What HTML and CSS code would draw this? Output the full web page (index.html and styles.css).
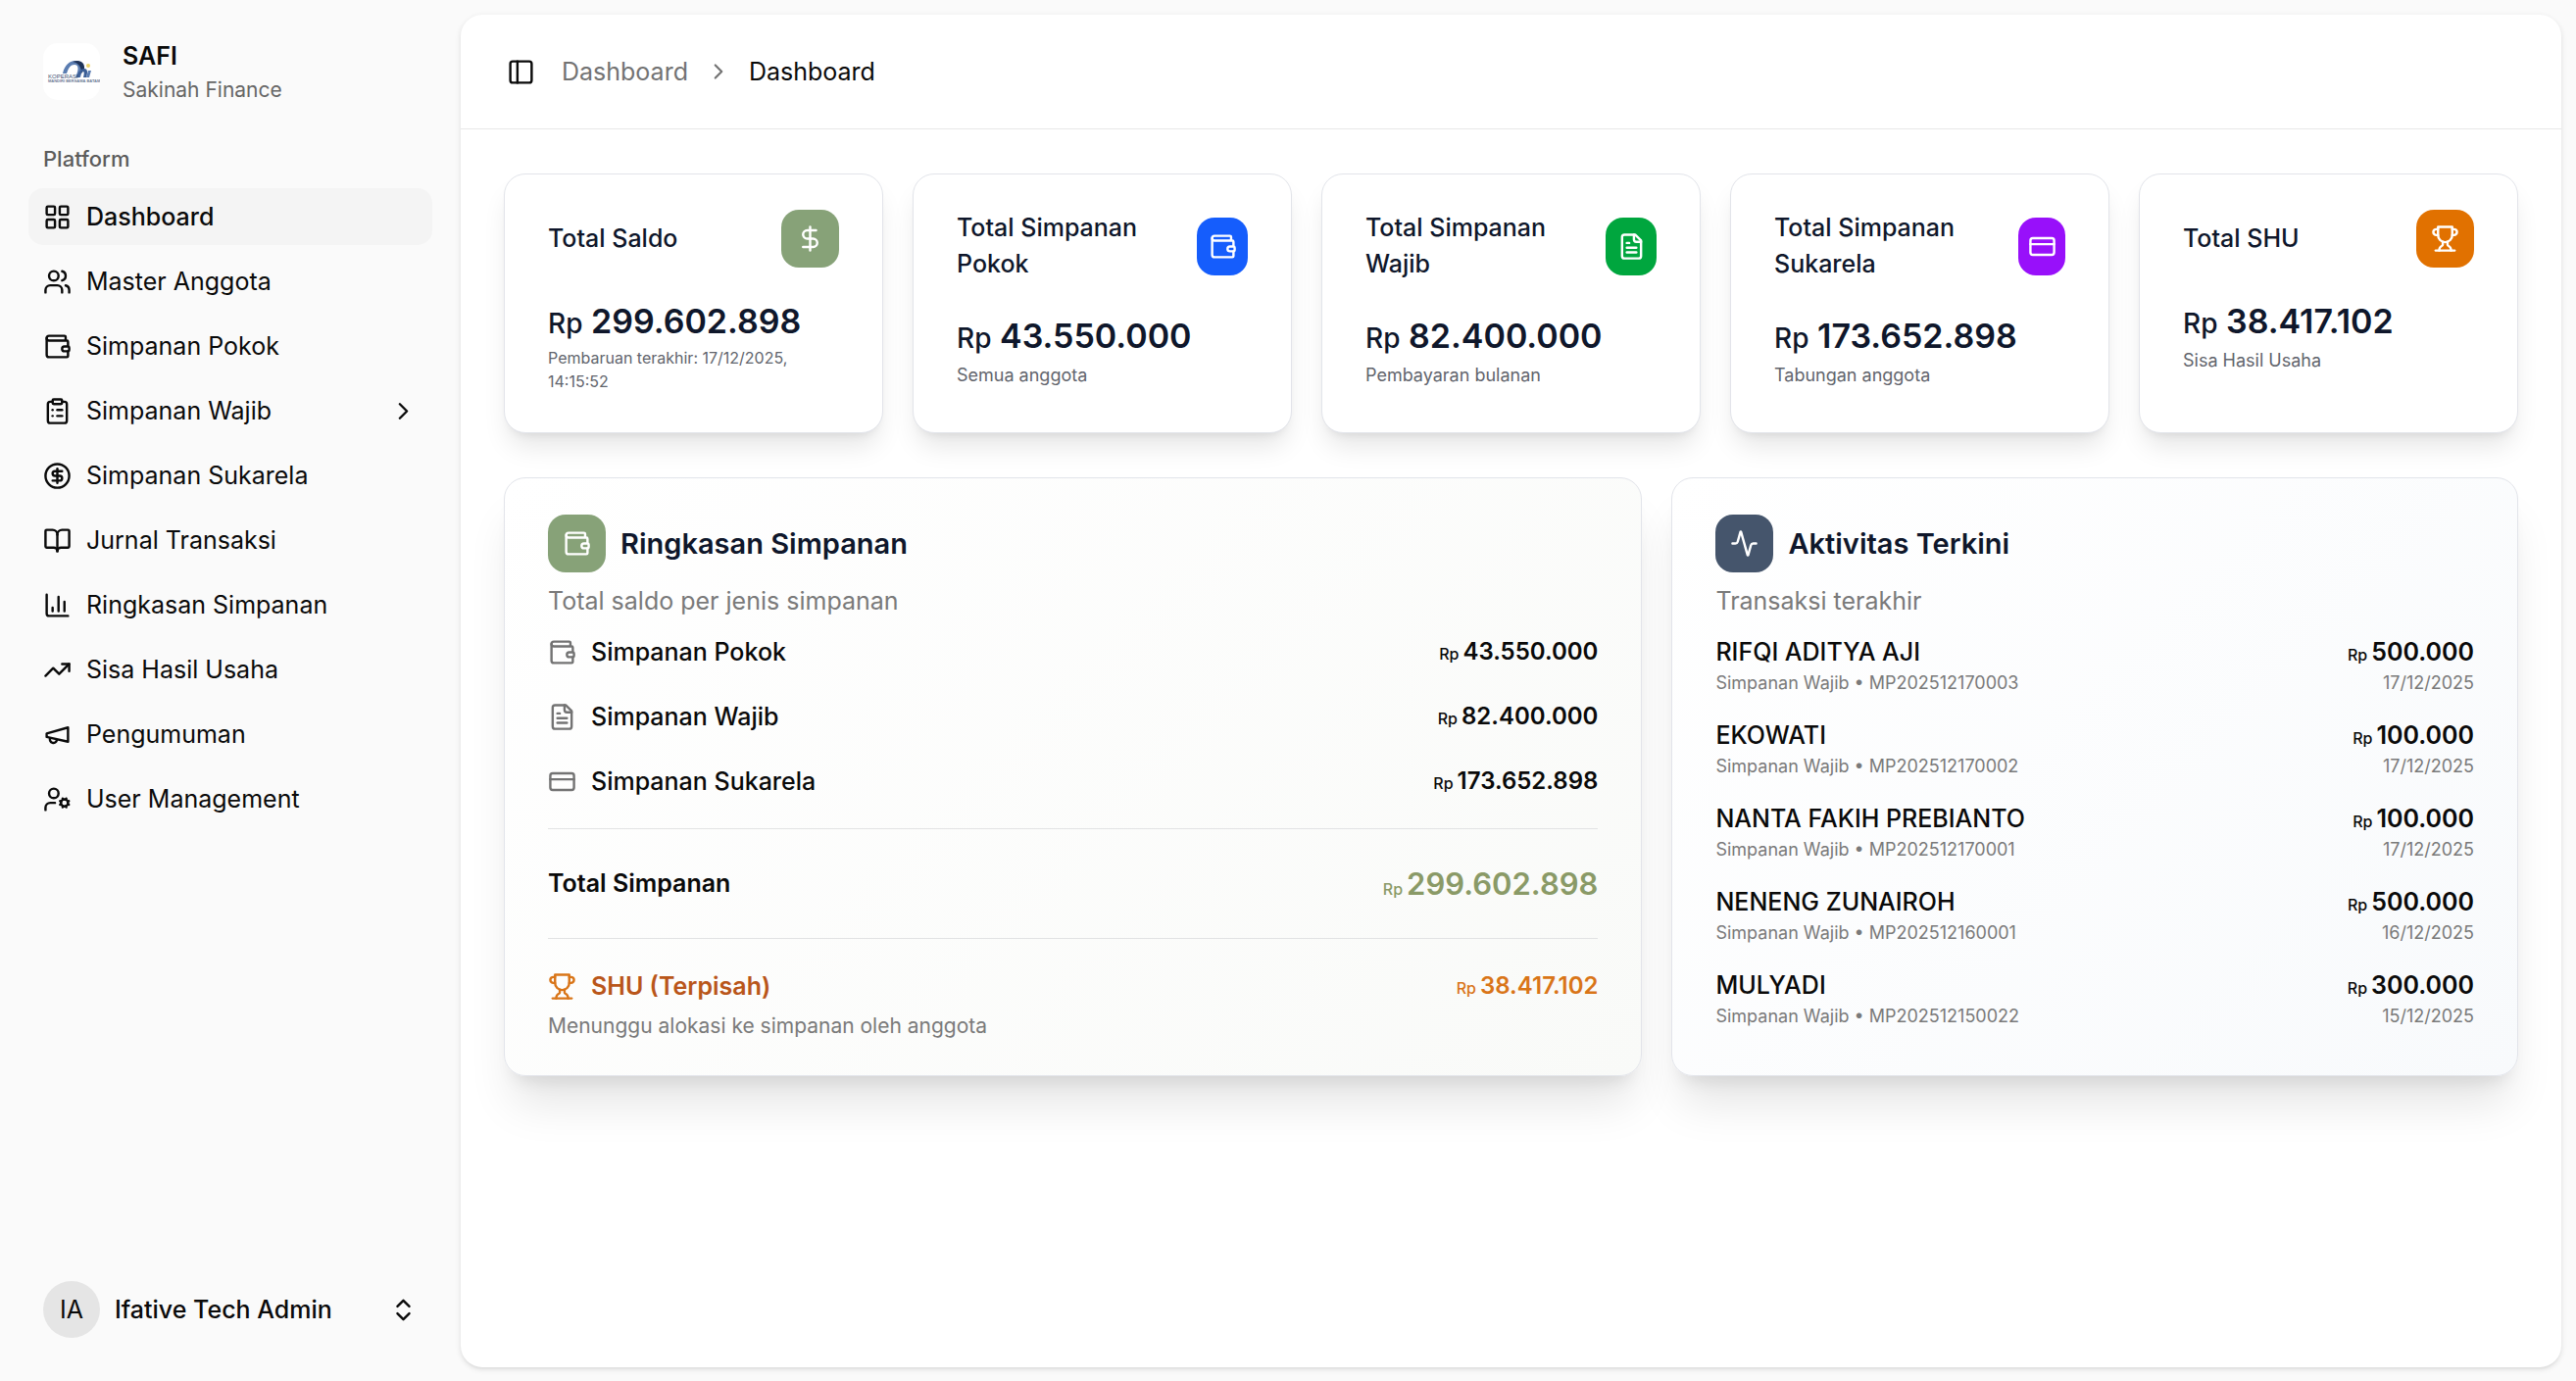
FILE: index.html
```html
<!DOCTYPE html>
<html lang="id">
<head>
<meta charset="utf-8">
<meta name="viewport" content="width=device-width, initial-scale=1">
<title>Dashboard - SAFI</title>
<link rel="stylesheet" href="styles.css">
</head>
<body>
<svg class="sprite" aria-hidden="true">
  <symbol id="grid" viewBox="0 0 24 24"><rect width="7" height="7" x="3" y="3" rx="1"/><rect width="7" height="7" x="14" y="3" rx="1"/><rect width="7" height="7" x="14" y="14" rx="1"/><rect width="7" height="7" x="3" y="14" rx="1"/></symbol>
  <symbol id="users" viewBox="0 0 24 24"><path d="M16 21v-2a4 4 0 0 0-4-4H6a4 4 0 0 0-4 4v2"/><circle cx="9" cy="7" r="4"/><path d="M22 21v-2a4 4 0 0 0-3-3.87"/><path d="M16 3.13a4 4 0 0 1 0 7.75"/></symbol>
  <symbol id="wallet" viewBox="0 0 24 24"><path d="M19 7V4a1 1 0 0 0-1-1H5a2 2 0 0 0 0 4h15a1 1 0 0 1 1 1v4h-3a2 2 0 0 0 0 4h3a1 1 0 0 0 1-1v-2a1 1 0 0 0-1-1"/><path d="M3 5v14a2 2 0 0 0 2 2h15a1 1 0 0 0 1-1v-4"/></symbol>
  <symbol id="clipboard" viewBox="0 0 24 24"><rect width="8" height="4" x="8" y="2" rx="1"/><path d="M16 4h2a2 2 0 0 1 2 2v14a2 2 0 0 1-2 2H6a2 2 0 0 1-2-2V6a2 2 0 0 1 2-2h2"/><path d="M12 11h4"/><path d="M12 16h4"/><path d="M8 11h.01"/><path d="M8 16h.01"/></symbol>
  <symbol id="coin" viewBox="0 0 24 24"><circle cx="12" cy="12" r="10"/><path d="M16 8h-6a2 2 0 1 0 0 4h4a2 2 0 1 1 0 4H8"/><path d="M12 18V6"/></symbol>
  <symbol id="book" viewBox="0 0 24 24"><path d="M12 7v14"/><path d="M3 18a1 1 0 0 1-1-1V4a1 1 0 0 1 1-1h5a4 4 0 0 1 4 4 4 4 0 0 1 4-4h5a1 1 0 0 1 1 1v13a1 1 0 0 1-1 1h-6a3 3 0 0 0-3 3 3 3 0 0 0-3-3z"/></symbol>
  <symbol id="chart" viewBox="0 0 24 24"><path d="M3 3v16a2 2 0 0 0 2 2h16"/><path d="M18 17V9"/><path d="M13 17V5"/><path d="M8 17v-3"/></symbol>
  <symbol id="trend" viewBox="0 0 24 24"><path d="M16 7h6v6"/><path d="m22 7-8.5 8.5-5-5L2 17"/></symbol>
  <symbol id="megaphone" viewBox="0 0 24 24"><path d="m3 11 18-5v12L3 14v-3z"/><path d="M11.6 16.8a3 3 0 1 1-5.8-1.6"/></symbol>
  <symbol id="user-cog" viewBox="0 0 24 24"><path d="M10 15H6a4 4 0 0 0-4 4v2"/><circle cx="9" cy="7" r="4"/><circle cx="18" cy="15" r="3"/><path d="m14.305 16.53.923-.382"/><path d="m15.228 13.852-.923-.383"/><path d="m16.852 12.228-.383-.923"/><path d="m16.852 17.772-.383.924"/><path d="m19.148 12.228.383-.923"/><path d="m19.53 18.696-.382-.924"/><path d="m20.772 13.852.924-.383"/><path d="m20.772 16.148.924.383"/></symbol>
  <symbol id="chevron" viewBox="0 0 24 24"><path d="m9 18 6-6-6-6"/></symbol>
  <symbol id="updown" viewBox="0 0 24 24"><path d="m7 15 5 5 5-5"/><path d="m7 9 5-5 5 5"/></symbol>
  <symbol id="sidebar" viewBox="0 0 24 24"><rect width="18" height="18" x="3" y="3" rx="2"/><path d="M9 3v18"/></symbol>
  <symbol id="dollar" viewBox="0 0 24 24"><path d="M12 2v20"/><path d="M17 5H9.500a3.500 3.500 0 0 0 0 7h5a3.500 3.500 0 0 1 0 7H6"/></symbol>
  <symbol id="file" viewBox="0 0 24 24"><path d="M15 2H6a2 2 0 0 0-2 2v16a2 2 0 0 0 2 2h12a2 2 0 0 0 2-2V7Z"/><path d="M14 2v4a2 2 0 0 0 2 2h4"/><path d="M10 9H8"/><path d="M16 13H8"/><path d="M16 17H8"/></symbol>
  <symbol id="card" viewBox="0 0 24 24"><rect width="20" height="14" x="2" y="5" rx="2"/><path d="M2 10h20"/></symbol>
  <symbol id="trophy" viewBox="0 0 24 24"><path d="M6 9H4.500a2.500 2.500 0 0 1 0-5H6"/><path d="M18 9h1.500a2.500 2.500 0 0 0 0-5H18"/><path d="M4 22h16"/><path d="M10 14.660V17c0 .55-.47.98-.97 1.210C7.850 18.750 7 20.240 7 22"/><path d="M14 14.660V17c0 .55.47.98.97 1.210C16.150 18.750 17 20.240 17 22"/><path d="M18 2H6v7a6 6 0 0 0 12 0V2Z"/></symbol>
  <symbol id="activity" viewBox="0 0 24 24"><path d="M22 12h-2.480a2 2 0 0 0-1.930 1.460l-2.350 8.360a.25.25 0 0 1-.48 0L9.240 2.180a.25.25 0 0 0-.48 0l-2.350 8.360A2 2 0 0 1 4.490 12H2"/></symbol>
</svg>

<div class="app">
  <aside class="sidebar">
    <a class="brand" href="#">
      <svg class="brand-logo" viewBox="0 0 58 58" role="img" aria-label="Koperasi">
        <path d="M20 31C22 22 27 18 33 18C39 18 42 22 38 35H33C37 26 36 22 32 22C28 22 26 25 24 31Z" fill="#5b7db1"/>
        <path d="M30 19C38 16 43 20 42 27L39 31C39 24 36 20 30 19Z" fill="#1f3358"/>
        <path d="M34 35C36 29 39 26 42 26C45 26 46 29 44 35H41C42 31 42 29 41 29C39 29 38 32 37 35Z" fill="#3c5f96"/>
        <path d="M44 35L46 28H49L47 35Z" fill="#5b7db1"/>
        <circle cx="46" cy="23" r="2" fill="#edd36b"/>
        <text x="5" y="36" class="logo-name">KOPERASI</text>
        <text x="5" y="40" class="logo-sub">MANDIRI BERSAMA BATAM</text>
      </svg>
      <span class="brand-text"><strong>SAFI</strong><span>Sakinah Finance</span></span>
    </a>
    <nav class="nav" aria-labelledby="nav-title">
      <h2 id="nav-title">Platform</h2>
      <a class="nav-item active" href="#"><svg class="icon"><use href="#grid"/></svg>Dashboard</a>
      <a class="nav-item" href="#"><svg class="icon"><use href="#users"/></svg>Master Anggota</a>
      <a class="nav-item" href="#"><svg class="icon"><use href="#wallet"/></svg>Simpanan Pokok</a>
      <button class="nav-item" type="button"><svg class="icon"><use href="#clipboard"/></svg>Simpanan Wajib<svg class="icon end"><use href="#chevron"/></svg></button>
      <a class="nav-item" href="#"><svg class="icon"><use href="#coin"/></svg>Simpanan Sukarela</a>
      <a class="nav-item" href="#"><svg class="icon"><use href="#book"/></svg>Jurnal Transaksi</a>
      <a class="nav-item" href="#"><svg class="icon"><use href="#chart"/></svg>Ringkasan Simpanan</a>
      <a class="nav-item" href="#"><svg class="icon"><use href="#trend"/></svg>Sisa Hasil Usaha</a>
      <a class="nav-item" href="#"><svg class="icon"><use href="#megaphone"/></svg>Pengumuman</a>
      <a class="nav-item" href="#"><svg class="icon"><use href="#user-cog"/></svg>User Management</a>
    </nav>
    <button class="account" type="button"><span class="avatar">IA</span>Ifative Tech Admin<svg class="icon end"><use href="#updown"/></svg></button>
  </aside>

  <main class="main">
    <header class="topbar">
      <button class="toggle" type="button" aria-label="Toggle sidebar"><svg class="icon"><use href="#sidebar"/></svg></button>
      <nav class="crumbs" aria-label="Breadcrumb">
        <a href="#">Dashboard</a>
        <svg class="icon crumb-sep"><use href="#chevron"/></svg>
        <span aria-current="page">Dashboard</span>
      </nav>
    </header>

    <div class="content">
      <section class="stats" aria-label="Statistik">
        <article class="stat">
          <div class="stat-head"><h3>Total Saldo</h3><span class="tile sage"><svg class="icon"><use href="#dollar"/></svg></span></div>
          <p class="stat-value"><span>Rp</span> 299.602.898</p>
          <p class="stat-note compact">Pembaruan terakhir: 17/12/2025, 14:15:52</p>
        </article>
        <article class="stat">
          <div class="stat-head"><h3>Total Simpanan Pokok</h3><span class="tile narrow blue"><svg class="icon"><use href="#wallet"/></svg></span></div>
          <p class="stat-value"><span>Rp</span> 43.550.000</p>
          <p class="stat-note">Semua anggota</p>
        </article>
        <article class="stat">
          <div class="stat-head"><h3>Total Simpanan Wajib</h3><span class="tile narrow green"><svg class="icon"><use href="#file"/></svg></span></div>
          <p class="stat-value"><span>Rp</span> 82.400.000</p>
          <p class="stat-note">Pembayaran bulanan</p>
        </article>
        <article class="stat">
          <div class="stat-head"><h3>Total Simpanan Sukarela</h3><span class="tile slim purple"><svg class="icon"><use href="#card"/></svg></span></div>
          <p class="stat-value"><span>Rp</span> 173.652.898</p>
          <p class="stat-note">Tabungan anggota</p>
        </article>
        <article class="stat">
          <div class="stat-head"><h3>Total SHU</h3><span class="tile orange"><svg class="icon"><use href="#trophy"/></svg></span></div>
          <p class="stat-value"><span>Rp</span> 38.417.102</p>
          <p class="stat-note">Sisa Hasil Usaha</p>
        </article>
      </section>

      <div class="panels">
        <section class="panel summary">
          <div class="panel-head"><span class="tile sage"><svg class="icon"><use href="#wallet"/></svg></span><h2>Ringkasan Simpanan</h2></div>
          <p class="panel-desc">Total saldo per jenis simpanan</p>
          <ul class="savings">
            <li><svg class="icon"><use href="#wallet"/></svg><span>Simpanan Pokok</span><b class="amount"><small>Rp</small>43.550.000</b></li>
            <li><svg class="icon"><use href="#file"/></svg><span>Simpanan Wajib</span><b class="amount"><small>Rp</small>82.400.000</b></li>
            <li><svg class="icon"><use href="#card"/></svg><span>Simpanan Sukarela</span><b class="amount"><small>Rp</small>173.652.898</b></li>
          </ul>
          <div class="total"><span>Total Simpanan</span><b class="amount"><small>Rp</small>299.602.898</b></div>
          <div class="shu"><svg class="icon"><use href="#trophy"/></svg><span>SHU (Terpisah)</span><b class="amount"><small>Rp</small>38.417.102</b></div>
          <p class="shu-note">Menunggu alokasi ke simpanan oleh anggota</p>
        </section>

        <section class="panel recent">
          <div class="panel-head"><span class="tile slate"><svg class="icon"><use href="#activity"/></svg></span><h2>Aktivitas Terkini</h2></div>
          <p class="panel-desc">Transaksi terakhir</p>
          <ul class="activity">
            <li><div><p class="name">RIFQI ADITYA AJI</p><p class="meta">Simpanan Wajib • MP202512170003</p></div><div class="right"><p class="amount"><small>Rp</small>500.000</p><p class="meta">17/12/2025</p></div></li>
            <li><div><p class="name">EKOWATI</p><p class="meta">Simpanan Wajib • MP202512170002</p></div><div class="right"><p class="amount"><small>Rp</small>100.000</p><p class="meta">17/12/2025</p></div></li>
            <li><div><p class="name">NANTA FAKIH PREBIANTO</p><p class="meta">Simpanan Wajib • MP202512170001</p></div><div class="right"><p class="amount"><small>Rp</small>100.000</p><p class="meta">17/12/2025</p></div></li>
            <li><div><p class="name">NENENG ZUNAIROH</p><p class="meta">Simpanan Wajib • MP202512160001</p></div><div class="right"><p class="amount"><small>Rp</small>500.000</p><p class="meta">16/12/2025</p></div></li>
            <li><div><p class="name">MULYADI</p><p class="meta">Simpanan Wajib • MP202512150022</p></div><div class="right"><p class="amount"><small>Rp</small>300.000</p><p class="meta">15/12/2025</p></div></li>
          </ul>
        </section>
      </div>
    </div>
  </main>
</div>
</body>
</html>
```
FILE: styles.css
```css
*, *::before, *::after { box-sizing: border-box; }

body {
  margin: 0;
  background: #fafafa;
  color: #0a0a0a;
  font: 400 25px/36px Inter, "Liberation Sans", sans-serif;
}

h2, h3, p, ul { margin: 0; padding: 0; font-weight: inherit; font-size: inherit; }
ul { list-style: none; }
a { color: inherit; text-decoration: none; }
button { border: 0; background: none; padding: 0; color: inherit; font: inherit; text-align: left; cursor: pointer; }

.sprite { display: none; }

.icon {
  width: 29px;
  height: 29px;
  flex: none;
  fill: none;
  stroke: currentColor;
  stroke-width: 2;
  stroke-linecap: round;
  stroke-linejoin: round;
}
.end { margin-left: auto; }

/* Shell */
.app { display: flex; min-height: 100vh; }

.sidebar {
  display: flex;
  flex-direction: column;
  flex: none;
  width: 470px;
  padding: 44px 29px 29px;
}

.brand { display: flex; align-items: center; gap: 23px; height: 58px; padding: 0 15px; }
.brand-logo { width: 58px; height: 58px; flex: none; background: #fff; border-radius: 15px; }
.logo-name { font: 500 6px "Liberation Sans", sans-serif; fill: #3d4f70; }
.logo-sub { font: 700 4px "Liberation Sans", sans-serif; fill: #6d7c96; }
.brand-text { display: flex; flex-direction: column; padding-top: 4px; }
.brand-text strong { font-weight: 600; line-height: 34px; }
.brand-text span { font-size: 21px; color: #666; }

.nav { display: flex; flex-direction: column; gap: 8px; padding-top: 38px; }
.nav h2 { padding: 0 15px; font-size: 22px; font-weight: 500; line-height: 44px; color: #5c5c5c; }
.nav-item { display: flex; align-items: center; gap: 15px; height: 58px; padding: 0 15px; border-radius: 15px; }
.nav-item.active { background: #f4f4f4; font-weight: 500; }

.account { display: flex; align-items: center; gap: 15px; height: 88px; padding: 0 15px; margin-top: auto; font-weight: 500; }
.avatar {
  display: grid;
  place-items: center;
  width: 58px;
  height: 58px;
  border-radius: 50%;
  background: #e5e5e5;
  font-weight: 400;
}

.main {
  flex: 1;
  min-width: 0;
  margin: 15px 15px 14px 0;
  border-radius: 22px;
  background: #fff;
  box-shadow: 0 2px 6px rgba(0, 0, 0, .1), 0 2px 4px -2px rgba(0, 0, 0, .1);
}

.topbar { display: flex; align-items: center; gap: 27px; height: 117px; padding: 0 47px; border-bottom: 1px solid #e8e8e8; }
.toggle { display: flex; }
.crumbs { display: flex; align-items: center; gap: 18px; }
.crumbs a, .crumb-sep { color: #737373; }
.crumb-sep { width: 26px; height: 26px; }

.content { display: flex; flex-direction: column; gap: 45px; padding: 45px 44px; }

/* Icon tiles */
.tile { display: grid; place-items: center; flex: none; width: 59px; height: 59px; border-radius: 18px; color: #fff; }
.tile.narrow { width: 52px; }
.tile.slim { width: 48px; }
.sage { background: #87a278; }
.blue { background: #155dfc; }
.green { background: #00a63e; }
.purple { background: #9810fa; }
.orange { background: #e17100; }
.slate { background: #45556c; }

/* Stat cards */
.stats { display: grid; grid-template-columns: repeat(5, 1fr); gap: 30px; }
.stat {
  padding: 36px 44px 40px;
  border: 1px solid #e2e4ea;
  border-radius: 22px;
  background: #fff;
  box-shadow: 0 18px 27px -5px rgba(0, 0, 0, .1), 0 7px 11px -7px rgba(0, 0, 0, .1);
}
.stat-head { display: flex; align-items: center; justify-content: space-between; margin-bottom: 29px; }
.stat-head h3 { max-width: 240px; font-weight: 500; line-height: 37px; color: #0f172b; }
.stat-value { font-size: 34px; font-weight: 600; line-height: 51px; color: #0f172b; white-space: nowrap; }
.stat-value span { font-size: 28px; font-weight: 500; line-height: 1; }
.stat-note { font-size: 18px; line-height: 29px; color: #62656d; }
.stat-note.compact { font-size: 16px; line-height: 24px; }

/* Panels */
.panels { display: grid; grid-template-columns: repeat(7, 1fr); gap: 30px; }
.panel {
  padding: 37px 44px 36px;
  border: 1px solid #e2e4ea;
  border-radius: 22px;
  box-shadow: 0 37px 46px -9px rgba(0, 0, 0, .1), 0 15px 18px -11px rgba(0, 0, 0, .1);
}
.summary { grid-column: span 4; background: linear-gradient(135deg, #fff, #f9faf8); }
.recent { grid-column: span 3; background: linear-gradient(135deg, #fff, #f8fafc); }
.panel-head { display: flex; align-items: center; gap: 15px; }
.panel-head h2 { font-size: 29px; font-weight: 600; color: #0f172b; }
.panel-desc { margin: 11px 0 16px; color: #7a7a7a; }

.amount { margin-left: auto; font-size: 24px; font-weight: 600; }
.amount small { margin-right: 4px; font-size: 16px; font-weight: 500; line-height: 1; }

.savings { display: flex; flex-direction: column; gap: 30px; padding-bottom: 30px; font-weight: 500; }
.savings li, .shu { display: flex; align-items: center; gap: 15px; }
.savings .icon { color: #737373; }
.total {
  display: flex;
  align-items: center;
  padding: 30px 0;
  border: solid #e2e3e4;
  border-width: 1px 0;
  font-weight: 600;
  line-height: 51px;
}
.total .amount { font-size: 31px; color: #8a9a67; }
.shu { padding-top: 30px; font-weight: 600; color: #b9561a; }
.shu .icon, .shu .amount { color: #d97518; }
.shu-note { margin-top: 8px; font-size: 21px; line-height: 29px; color: #7a7a7a; }

.activity { display: flex; flex-direction: column; gap: 22px; }
.activity li { display: flex; justify-content: space-between; }
.activity .amount { font-size: 25px; }
.name { font-weight: 500; }
.meta { font-size: 18px; line-height: 27px; color: #7a7a7a; }
.right { text-align: right; }
```
